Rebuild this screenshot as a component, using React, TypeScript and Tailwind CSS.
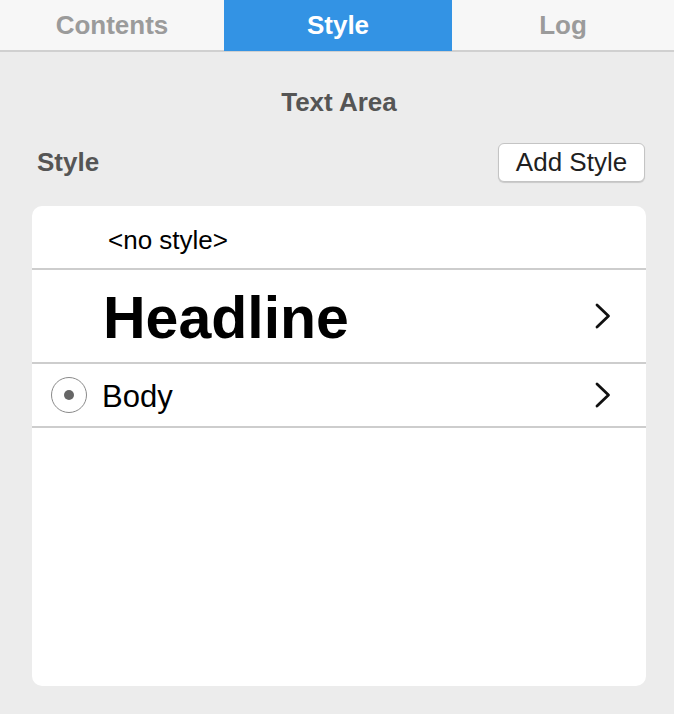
import React from "react";

function Chevron() {
  return (
    <svg width="18" height="28" viewBox="0 0 18 28" fill="none">
      <path d="M3 3 L14.5 14 L3 25" stroke="#111" strokeWidth="2.8" strokeLinecap="round" strokeLinejoin="round" />
    </svg>
  );
}

export default function App() {
  const font = { fontFamily: '"Liberation Sans", Arial, sans-serif' };
  return (
    <div className="w-[674px] h-[714px] bg-[#ececec] flex flex-col" style={font}>
      <div className="h-[52px] border-b-2 border-[#d0d0d0] bg-[#f7f7f7] grid grid-cols-[224px_228px_1fr]">
        <div className="h-[50px] flex items-center justify-center text-[26px] font-bold text-[#9b9b9b]">Contents</div>
        <div className="h-[51px] flex items-center justify-center text-[26px] font-bold text-white bg-[#3393e4]">Style</div>
        <div className="h-[50px] flex items-center justify-center text-[26px] font-bold text-[#9b9b9b]">Log</div>
      </div>
      <div className="mt-[35px] h-[30px] pl-[4px] flex items-center justify-center text-[26px] font-bold text-[#555555]">
        Text Area
      </div>
      <div className="mt-[26px] h-[39px] flex items-center justify-between pl-[37px] pr-[29px]">
        <span className="text-[26px] font-bold text-[#555555]">Style</span>
        <button className="h-[39px] w-[147px] bg-white border border-[#c4c4c4] rounded-[6px] shadow-[0_1px_1px_rgba(0,0,0,0.15)] text-[26px] text-[#1f1f1f] flex items-center justify-center">
          Add Style
        </button>
      </div>
      <div className="mt-[24px] ml-[32px] w-[614px] h-[480px] bg-white rounded-[10px] overflow-hidden flex flex-col">
        <div className="h-[64px] border-b-2 border-[#cdcdcd] flex items-center pl-[76px] pt-[6px] text-[26px] text-black">
          &lt;no style&gt;
        </div>
        <div className="h-[94px] border-b-2 border-[#cdcdcd] flex items-center justify-between pl-[71px] pr-[34px]">
          <span className="text-[59px] font-bold text-black leading-none pt-[4px]">Headline</span>
          <Chevron />
        </div>
        <div className="h-[64px] border-b-2 border-[#cdcdcd] flex items-center justify-between pl-[19px] pr-[34px]">
          <div className="flex items-center gap-[15px]">
            <div className="w-[36px] h-[36px] rounded-full border-[1.5px] border-[#8a8a8a] flex items-center justify-center">
              <div className="w-[10px] h-[10px] rounded-full bg-[#666666]" />
            </div>
            <span className="text-[31px] text-black pt-[4px]">Body</span>
          </div>
          <Chevron />
        </div>
      </div>
    </div>
  );
}
